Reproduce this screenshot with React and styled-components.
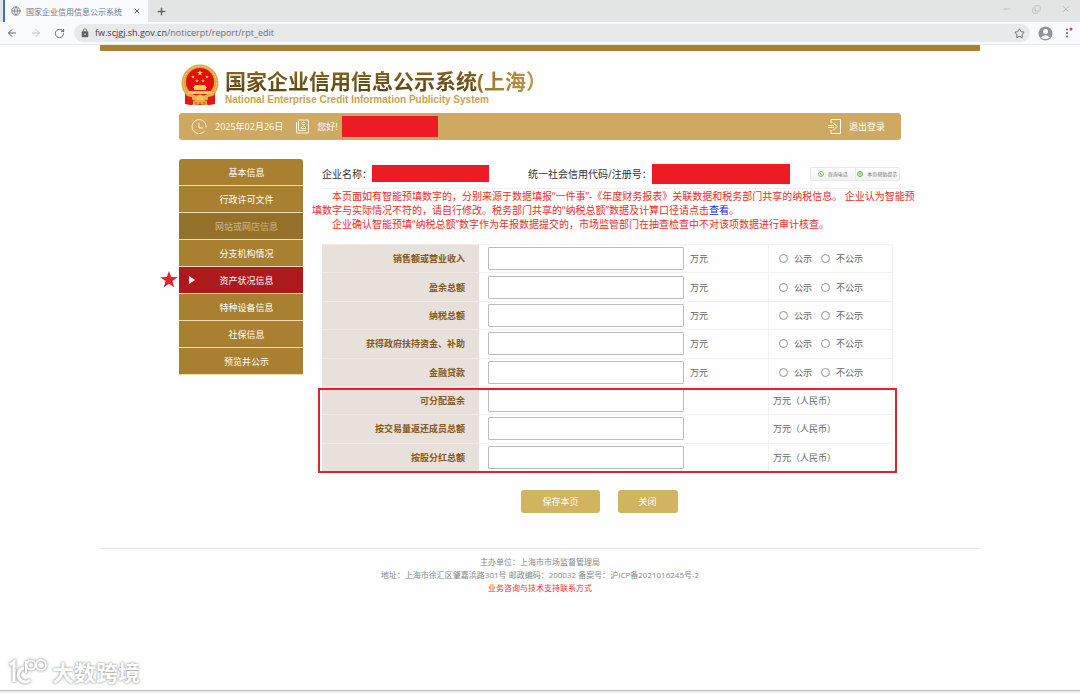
import React from "react";
import styled, { createGlobalStyle, css } from "styled-components";
import {
  ArrowLeft,
  ArrowRight,
  Copy,
  Globe,
  Minus,
  Plus,
  RotateCw,
  Star,
  X,
} from "lucide-react";
import { MdLock } from "react-icons/md";

const GlobalStyle = createGlobalStyle`
  * {
    box-sizing: border-box;
  }
  body {
    margin: 0;
    background: #fefefe;
    color: #333;
    font-family: "Open Sans", "Noto Sans CJK SC", sans-serif;
    font-size: 9px;
  }
  button, input {
    font-family: inherit;
    margin: 0;
  }
  svg {
    display: block;
    flex-shrink: 0;
  }
`;

const Screen = styled.div`
  display: flex;
  flex-direction: column;
  min-height: 100vh;
`;

/* browser frame */

const TabStrip = styled.div`
  display: flex;
  align-items: center;
  height: 22px;
  padding: 0 9px 0 3px;
  background: #e3e5e4;
  color: #5f6368;
`;

const Tab = styled.div`
  display: flex;
  align-items: center;
  gap: 5px;
  width: 145px;
  height: 22px;
  padding: 0 7px 0 6px;
  border-left: 2px solid #3b6fd8;
  background: #f8fafd;
  color: #74777b;
  font-size: 8px;
  white-space: nowrap;
`;

const IconButton = styled.button`
  display: flex;
  align-items: center;
  justify-content: center;
  padding: 0;
  border: 0;
  background: none;
  color: ${({ $color }) => $color || "#5f6368"};
`;

const TabClose = styled(IconButton)`
  margin-left: auto;
`;

const NewTab = styled(IconButton)`
  margin-left: 8px;
`;

const WindowControls = styled.div`
  display: flex;
  gap: 20px;
  margin-left: auto;
  padding-bottom: 4px;
`;

const Toolbar = styled.div`
  display: flex;
  align-items: center;
  gap: 12px;
  height: 23px;
  padding: 0 7px 0 6px;
  border-bottom: 1px solid #e6e8eb;
  background: #f8fafd;
`;

const AddressBar = styled.div`
  display: flex;
  flex: 1;
  align-items: center;
  gap: 5px;
  height: 18px;
  margin-right: -4px;
  margin-left: -3px;
  padding: 0 5px 0 6px;
  border-radius: 9px;
  background: #e8e9eb;
  color: #5f6368;
`;

const Address = styled.div`
  flex: 1;
  color: #3c4043;
  font-size: 9px;
  line-height: 18px;

  span {
    color: #6b6e72;
  }
`;

/* page */

const Site = styled.div`
  width: 100%;
  max-width: 880px;
  margin: 0 auto;
  border-top: 6px solid #a9802f;
`;

const Inner = styled.div`
  max-width: 722px;
  margin: 0 auto;
`;

const Masthead = styled.header`
  display: flex;
  align-items: center;
  gap: 6px;
  height: 62px;
  padding: 6px 0 0 2px;
`;

const Titles = styled.div`
  padding-top: 4px;
`;

const SiteName = styled.h1`
  display: flex;
  margin: 0;
  font-size: 21px;
  font-weight: 700;
  line-height: 26px;
  white-space: nowrap;

  span {
    color: transparent;
    background: linear-gradient(#8a6a26, #57400f);
    background-clip: text;
  }
  span + span {
    background: linear-gradient(90deg, #96702a, #c9a04e);
    background-clip: text;
  }
`;

const EnglishName = styled.p`
  margin: 0;
  color: #c9a350;
  font-family: "Liberation Sans", sans-serif;
  font-size: 10px;
  font-weight: 700;
  line-height: 12px;
`;

const UserBar = styled.div`
  display: flex;
  align-items: center;
  height: 27px;
  padding: 0 16px 0 12px;
  border-radius: 3px;
  background: #cfa961;
  color: #fff;
`;

const UserItem = styled.span`
  display: flex;
  align-items: center;
  gap: 8px;
  margin-right: ${({ $after }) => $after}px;
`;

const Redacted = styled.span`
  width: ${({ $width }) => $width}px;
  height: ${({ $height }) => $height}px;
  background: #ed1c24;
`;

const Logout = styled.a`
  display: flex;
  align-items: center;
  gap: 8px;
  margin-left: auto;
  color: #fff;
  text-decoration: none;
`;

const Columns = styled.div`
  display: flex;
  align-items: flex-start;
  gap: 9px;
  padding-top: 19px;
`;

const Menu = styled.nav`
  display: flex;
  flex-direction: column;
  flex-shrink: 0;
  width: 124px;
`;

const MenuItem = styled.a`
  position: relative;
  display: flex;
  align-items: center;
  justify-content: center;
  height: 27px;
  padding-left: 11px;
  border-bottom: 1px solid #eeddb8;
  background: #a9802f;
  color: #fff;
  text-decoration: none;

  &:first-child {
    border-radius: 3px 3px 0 0;
  }
  ${({ $state }) =>
    $state === "disabled" &&
    css`
      background: #94712b;
      color: #c9b78f;
    `}
  ${({ $state }) =>
    $state === "active" &&
    css`
      background: #ad1a1c;

      &::before {
        content: "";
        position: absolute;
        left: 10px;
        border: solid transparent;
        border-width: 4px 0 4px 6px;
        border-left-color: #fff;
      }
    `}
`;

const StarMark = styled.svg`
  position: absolute;
  right: 100%;
`;

const Content = styled.main`
  flex: 1;
  min-width: 0;
`;

const CompanyRow = styled.div`
  display: flex;
  align-items: center;
  gap: 39px;
  height: 30px;
  margin-left: 10px;
  border-bottom: 1px solid #f3efee;
  font-size: 10px;
  white-space: nowrap;
`;

const CompanyField = styled.div`
  display: flex;
  align-items: center;
`;

const Helpers = styled.div`
  display: flex;
  margin-left: -19px;
  border: 1px solid #e8e8e8;
  border-radius: 2px;
  background: linear-gradient(#fff, #f1f1f1);
`;

const Helper = styled.a`
  display: flex;
  align-items: center;
  justify-content: center;
  gap: 4px;
  width: 44px;
  height: 12px;
  color: #777;
  font-size: 5px;
  text-decoration: none;

  & + & {
    border-left: 1px solid #e8e8e8;
  }
`;

const Notice = styled.div`
  color: #ee2b2b;
  font-size: 10px;
  line-height: 14px;
  white-space: nowrap;

  p {
    margin: 0;
    text-indent: 2em;
  }
  a {
    color: #1a1ae6;
    text-decoration: none;
  }
`;

const TableWrap = styled.div`
  position: relative;
  margin: 13px 8px 0 10px;
`;

const AssetTable = styled.table`
  width: 100%;
  height: 228px;
  border-collapse: collapse;
  table-layout: fixed;
  color: #666;

  th,
  td {
    padding: 0 0 0 10px;
    border: 1px solid #f4f2f1;
    text-align: left;
  }
  th {
    width: 156px;
    padding: 0 13px 0 0;
    border-color: #f0ebe7 #e8e0da;
    background: #e8e0da;
    color: #86581a;
    font-weight: 700;
    text-align: right;
  }
  td:nth-child(2) {
    padding-left: 9px;
  }
  td:last-child {
    width: 124px;
  }
  td.currency {
    padding-left: 4px;
  }
`;

const Amount = styled.span`
  display: flex;
  align-items: center;
  gap: 6px;
`;

const AmountInput = styled.input`
  width: 196px;
  height: 23px;
  padding: 0 4px;
  border: 1px solid #bdbdbd;
  border-radius: 1px;
  background: #fff;
  font-size: 9px;
`;

const Choices = styled.span`
  display: flex;
  gap: 9px;
`;

const Choice = styled.label`
  display: flex;
  align-items: center;
  gap: 6px;
`;

const Radio = styled.input`
  width: 9px;
  height: 9px;
  border: 1px solid #949494;
  border-radius: 50%;
  background: #fff;
  appearance: none;

  &:checked {
    background: #555;
  }
`;

const Highlight = styled.div`
  position: absolute;
  right: -4px;
  bottom: -1px;
  left: -4px;
  height: calc(100% * 3 / 8);
  border: 2px solid #dc2430;
  pointer-events: none;
`;

const Actions = styled.div`
  display: flex;
  justify-content: center;
  gap: 18px;
  padding: 18px 14px 35px 0;
`;

const ActionButton = styled.button`
  height: 23px;
  padding: 0 21px;
  border: 0;
  border-radius: 3px;
  background: #d2b35f;
  color: #fff;
  font-size: 9px;
`;

const Footer = styled.footer`
  padding-top: 6px;
  border-top: 1px solid #e4e4e4;
  color: #888;
  font-size: 8px;
  line-height: 13px;
  text-align: center;

  p {
    margin: 0;
  }
  a {
    color: #f03030;
    text-decoration: none;
  }
`;

const Watermark = styled.div`
  display: flex;
  align-items: center;
  gap: 3px;
  margin-top: auto;
  padding: 0 0 2px 8px;
  color: #fff;
  font-size: 22px;
  font-weight: 700;
  line-height: 32px;
  text-shadow: 0 0 2px #999, 0 0 3px #bbb;

  svg {
    filter: drop-shadow(0 0 1px #999) drop-shadow(0 0 1px #ccc);
  }
`;

const WindowEdge = styled.div`
  height: 3px;
  border-top: 1px solid #bcbcbc;
  background: #ededed;
`;

const menu = [
  { name: "基本信息" },
  { name: "行政许可文件" },
  { name: "网站或网店信息", state: "disabled" },
  { name: "分支机构情况" },
  { name: "资产状况信息", state: "active" },
  { name: "特种设备信息" },
  { name: "社保信息" },
  { name: "预览并公示" },
];

const rows = [
  { id: "sales", name: "销售额或营业收入", open: true },
  { id: "surplus", name: "盈余总额", open: true },
  { id: "tax", name: "纳税总额", open: true },
  { id: "subsidy", name: "获得政府扶持资金、补助", open: true },
  { id: "loan", name: "金融贷款", open: true },
  { id: "distributable", name: "可分配盈余" },
  { id: "returned", name: "按交易量返还成员总额" },
  { id: "dividend", name: "按股分红总额" },
];

const STAR = "M0-5 1.2-1.6 4.8-1.5 1.9.6 2.9 4 0 2-2.9 4-1.9.6-4.8-1.5-1.2-1.6Z";

const Emblem = () => (
  <svg width="38" height="43" viewBox="0 0 38 43">
    <path d="M4 28V40l7 1 2-1 6 1 6-1 2 1 7-1V28Z" fill="#d91a12" />
    <circle cx="19" cy="19" r="18.5" fill="#dca544" />
    <circle cx="19" cy="19" r="16.5" fill="none" stroke="#f3d27c" strokeDasharray="2 1" />
    <circle cx="19" cy="18" r="14" fill="#e20f0b" />
    <g fill="#f8d252">
      <path d={STAR} transform="translate(19 9) scale(.6)" />
      <path d={STAR} transform="translate(12 13) scale(.4)" />
      <path d={STAR} transform="translate(16 17) scale(.4)" />
      <path d={STAR} transform="translate(22 17) scale(.4)" />
      <path d={STAR} transform="translate(26 13) scale(.4)" />
      <path d="M14 21h10l2 3H12ZM13 24h12v2H13ZM7 27h24v3H7Z" />
    </g>
    <path d="M7 30q12 4 24 0v4q-12 2-24 0Z" fill="#e5b04a" />
    <path d="M5 32l6 1v8l-6-1ZM33 32l-6 1v8l6-1Z" fill="#e2180f" />
    <circle cx="19" cy="34" r="3.500" fill="#f1c65c" />
    <path d="M12 37q7-2 14 0v4q-7-2-14 0Z" fill="#e6ae3f" />
    <path d="M15 38v3M19 38v3M23 38v3" stroke="#d9301a" />
  </svg>
);

const ClockIcon = () => (
  <svg width="16" height="16" viewBox="0 0 16 16" fill="none" stroke="#fbf1dc">
    <path d="M13.5 12A7 7 0 1 1 15 8.5" />
    <path d="M8 4v5h4" />
  </svg>
);

const UserIcon = () => (
  <svg width="13" height="15" viewBox="0 0 13 15" fill="none" stroke="#fbf1dc">
    <path d="M2.5 1H12.5V14H.5V3M2.500 2V11.500H10" />
    <circle cx="7.500" cy="4.500" r="1.500" />
    <path d="M5.500 9.500V8q2-2 4 0v1.500Z" />
  </svg>
);

const LogoutIcon = () => (
  <svg width="13" height="15" viewBox="0 0 13 15" fill="none" stroke="#fff">
    <path d="M3 4V.5h9.500v14H3V11" />
    <path d="M0 6.500h6M0 8.500h6M5 3.500 9 7.500 5 11.500" />
  </svg>
);

const PhoneIcon = () => (
  <svg width="6" height="6" viewBox="0 0 12 12" fill="none" stroke="#55ab45" strokeWidth="1.500">
    <circle cx="6" cy="6" r="5" />
    <path d="M4 3q0 4 5 6" strokeWidth="2" />
  </svg>
);

const HelpIcon = () => (
  <svg width="6" height="6" viewBox="0 0 12 12" fill="none" stroke="#55ab45" strokeWidth="2">
    <circle cx="6" cy="6" r="5" />
    <path d="M4 5q2-3 4 0L6 7v2" />
  </svg>
);

const Avatar = () => (
  <svg width="15" height="15" viewBox="0 0 15 15">
    <circle cx="7.500" cy="7.500" r="7" fill="#909397" />
    <circle cx="7.500" cy="5.500" r="2.500" fill="#fff" />
    <path d="M3 11.500q4.500-4.500 9 0-4.500 3-9 0Z" fill="#fff" />
  </svg>
);

const DotsIcon = () => (
  <svg width="8" height="14" viewBox="0 0 8 14">
    <g fill="#5f6368">
      <circle cx="2" cy="3.500" r="1" />
      <circle cx="2" cy="7" r="1" />
      <circle cx="2" cy="10.500" r="1" />
    </g>
    <circle cx="6" cy="3" r="1.500" fill="#e23b30" />
  </svg>
);

const WatermarkLogo = () => (
  <svg width="41" height="32" viewBox="0 0 41 32" fill="none" stroke="#fff" strokeWidth="3">
    <path d="M2 9 6 6v20" />
    <path d="M16 12a7 7 0 1 0 6 12" />
    <path d="M18 17V5" strokeWidth="2" />
    <circle cx="23" cy="9" r="4.500" strokeWidth="2" />
    <circle cx="33" cy="9" r="5" strokeWidth="2" />
  </svg>
);

const BrowserFrame = () => (
  <>
    <TabStrip>
      <Tab>
        <Globe size={10} />
        国家企业信用信息公示系统
        <TabClose aria-label="关闭标签页">
          <X size={8} strokeWidth={3} />
        </TabClose>
      </Tab>
      <NewTab aria-label="新标签页">
        <Plus size={11} strokeWidth={3} />
      </NewTab>
      <WindowControls>
        <IconButton $color="#b4b6b6" aria-label="最小化">
          <Minus size={10} />
        </IconButton>
        <IconButton $color="#b4b6b6" aria-label="还原">
          <Copy size={9} transform="scale(1 -1)" />
        </IconButton>
        <IconButton $color="#b4b6b6" aria-label="关闭窗口">
          <X size={10} />
        </IconButton>
      </WindowControls>
    </TabStrip>
    <Toolbar>
      <IconButton aria-label="后退">
        <ArrowLeft size={12} />
      </IconButton>
      <IconButton $color="#c2c4c7" aria-label="前进">
        <ArrowRight size={12} />
      </IconButton>
      <IconButton aria-label="刷新">
        <RotateCw size={11} />
      </IconButton>
      <AddressBar>
        <MdLock size={10} />
        <Address>
          fw.scjgj.sh.gov.cn<span>/noticerpt/report/rpt_edit</span>
        </Address>
        <Star size={11} />
      </AddressBar>
      <Avatar />
      <IconButton aria-label="菜单">
        <DotsIcon />
      </IconButton>
    </Toolbar>
  </>
);

const AssetRow = ({ row }) => (
  <tr>
    <th scope="row">
      <label htmlFor={row.id}>{row.name}</label>
    </th>
    <td>
      <Amount>
        <AmountInput id={row.id} type="text" />
        {row.open && "万元"}
      </Amount>
    </td>
    {row.open ? (
      <td>
        <Choices>
          <Choice>
            <Radio type="radio" name={`${row.id}-open`} />
            公示
          </Choice>
          <Choice>
            <Radio type="radio" name={`${row.id}-open`} />
            不公示
          </Choice>
        </Choices>
      </td>
    ) : (
      <td className="currency">万元（人民币）</td>
    )}
  </tr>
);

export default function App() {
  return (
    <Screen>
      <GlobalStyle />
      <BrowserFrame />
      <Site>
        <Inner>
          <Masthead>
            <Emblem />
            <Titles>
              <SiteName>
                <span>国家企业信用信息公示系统</span>
                <span>(上海）</span>
              </SiteName>
              <EnglishName>
                National Enterprise Credit Information Publicity System
              </EnglishName>
            </Titles>
          </Masthead>
          <UserBar>
            <UserItem $after={13}>
              <ClockIcon />
              2025年02月26日
            </UserItem>
            <UserItem $after={4}>
              <UserIcon />
              您好!
            </UserItem>
            <Redacted $width={96} $height={21} />
            <Logout href="#logout">
              <LogoutIcon />
              退出登录
            </Logout>
          </UserBar>
          <Columns>
            <Menu>
              {menu.map((item) => (
                <MenuItem key={item.name} href="#menu" $state={item.state}>
                  {item.state === "active" && (
                    <StarMark width="20" height="20" viewBox="-5.500 -5.500 11 11">
                      <path d={STAR} fill="#e8202a" />
                    </StarMark>
                  )}
                  {item.name}
                </MenuItem>
              ))}
            </Menu>
            <Content>
              <CompanyRow>
                <CompanyField>
                  企业名称：
                  <Redacted $width={117} $height={17} />
                </CompanyField>
                <CompanyField>
                  统一社会信用代码/注册号：
                  <Redacted $width={138} $height={20} />
                </CompanyField>
                <Helpers>
                  <Helper href="#phone">
                    <PhoneIcon />
                    咨询电话
                  </Helper>
                  <Helper href="#help">
                    <HelpIcon />
                    本页帮助提示
                  </Helper>
                </Helpers>
              </CompanyRow>
              <Notice>
                <p>
                  本页面如有智能预填数字的，分别来源于数据填报“一件事”-《年度财务报表》关联数据和税务部门共享的纳税信息。 企业认为智能预
                  <br />
                  填数字与实际情况不符的，请自行修改。税务部门共享的“纳税总额”数据及计算口径请点击
                  <a href="#view">查看</a>。
                </p>
                <p>
                  企业确认智能预填“纳税总额”数字作为年报数据提交的，市场监管部门在抽查检查中不对该项数据进行审计核查。
                </p>
              </Notice>
              <TableWrap>
                <AssetTable>
                  <tbody>
                    {rows.map((row) => (
                      <AssetRow key={row.id} row={row} />
                    ))}
                  </tbody>
                </AssetTable>
                <Highlight />
              </TableWrap>
              <Actions>
                <ActionButton>保存本页</ActionButton>
                <ActionButton>关闭</ActionButton>
              </Actions>
            </Content>
          </Columns>
        </Inner>
        <Footer>
          <p>主办单位：上海市市场监督管理局</p>
          <p>
            地址：上海市徐汇区肇嘉浜路301号 邮政编码：200032 备案号：沪ICP备2021016245号-2
          </p>
          <p>
            <a href="#contact">业务咨询与技术支持联系方式</a>
          </p>
        </Footer>
      </Site>
      <Watermark>
        <WatermarkLogo />
        大数跨境
      </Watermark>
      <WindowEdge />
    </Screen>
  );
}
